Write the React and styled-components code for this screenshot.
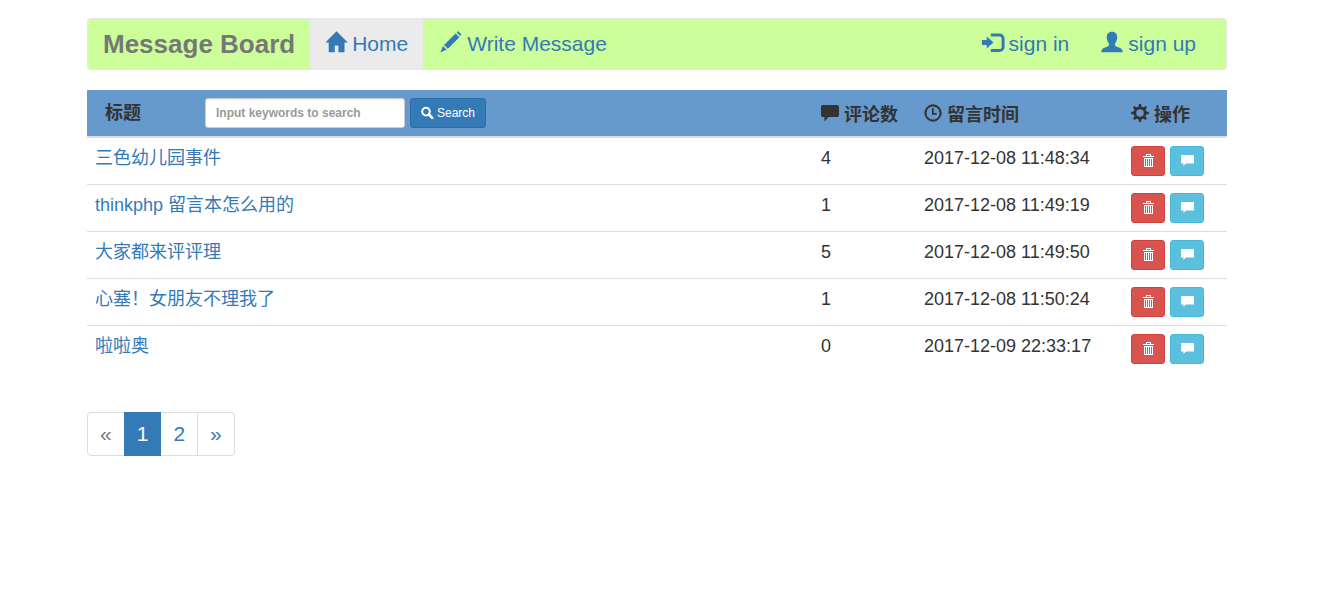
import React from 'react';
import styled, { createGlobalStyle } from 'styled-components';

const GlobalStyle = createGlobalStyle`
  *, *::before, *::after { box-sizing: border-box; }
  body {
    margin: 0;
    background: #fff;
    color: #333;
    font-family: "Liberation Sans", Arial, "Noto Sans CJK SC", sans-serif;
    font-size: 18px;
    line-height: 26px;
  }
  a { color: #337ab7; text-decoration: none; }
`;

const Page = styled.div`
  padding: 18px 20px 20px 15px;
`;

const Container = styled.div`
  max-width: 1140px;
  margin: 0 auto;
`;

const Navbar = styled.nav`
  display: flex;
  min-height: 52px;
  margin-bottom: 20px;
  padding-right: 15px;
  background: #ccff99;
  border: 1px solid #e7e7e7;
  border-radius: 4px;
`;

const Brand = styled.a`
  padding: 12px 15px;
  color: #777;
  font-size: 26px;
  font-weight: bold;
  white-space: nowrap;
`;

const NavList = styled.ul`
  display: flex;
  gap: 2px;
  flex: ${(p) => (p.$grow ? 1 : 'none')};
  margin: 0;
  padding: 0;
  list-style: none;
`;

const NavLink = styled.a`
  display: flex;
  gap: 5px;
  height: 100%;
  padding: 12px 15px;
  font-size: 21px;
  white-space: nowrap;
  background: ${(p) => (p.$active ? '#ebebeb' : 'transparent')};
`;

const Glyph = styled.svg`
  flex: none;
  width: ${(p) => p.$size}px;
  height: ${(p) => p.$size}px;
  fill: currentColor;
  overflow: visible;
`;

const Table = styled.table`
  width: 100%;
  margin-bottom: 40px;
  table-layout: fixed;
  border-collapse: separate;
  border-spacing: 0;
`;

const Col = styled.col`
  width: ${(p) => p.$width};
`;

const HeadCell = styled.th`
  padding: 8px;
  background: #6699cc;
  border-bottom: 2px solid #ddd;
  text-align: left;
  vertical-align: bottom;
  white-space: nowrap;
`;

const HeadLabel = styled.span`
  display: flex;
  align-items: center;
  gap: 5px;
  ${Glyph} { margin-bottom: 4px; }
`;

const SearchForm = styled.form`
  display: flex;
  align-items: center;
  gap: 5px;
  padding-left: 10px;
`;

const SearchTitle = styled.label`
  width: 95px;
  line-height: 30px;
`;

const SearchInput = styled.input`
  width: 200px;
  height: 30px;
  padding: 5px 10px;
  color: #555;
  background: #fff;
  border: 1px solid #ccc;
  border-radius: 3px;
  font: bold 12px/18px "Liberation Sans", Arial, sans-serif;
  box-shadow: inset 0 1px 1px rgba(0, 0, 0, 0.075);
  &::placeholder { color: #999; opacity: 1; }
`;

const tones = {
  primary: ['#337ab7', '#2e6da4'],
  danger: ['#d9534f', '#d43f3a'],
  info: ['#5bc0de', '#46b8da'],
};

const Button = styled.button`
  display: inline-flex;
  align-items: center;
  gap: 4px;
  height: 30px;
  padding: 0 10px;
  color: #fff;
  background: ${(p) => tones[p.$tone][0]};
  border: 1px solid ${(p) => tones[p.$tone][1]};
  border-radius: 3px;
  font: 12px/18px "Liberation Sans", Arial, sans-serif;
  cursor: pointer;
`;

const Cell = styled.td`
  padding: 8px;
  vertical-align: top;
  line-height: 24px;
  white-space: nowrap;
  tr + tr > & { border-top: 1px solid #ddd; }
`;

const Actions = styled.div`
  display: flex;
  gap: 5px;
`;

const Pagination = styled.ul`
  display: flex;
  margin: 0;
  padding: 0;
  list-style: none;
  li + li { margin-left: -1px; }
  li:first-child > * { border-radius: 4px 0 0 4px; }
  li:last-child > * { border-radius: 0 4px 4px 0; }
`;

const PageLink = styled.a`
  display: block;
  position: relative;
  z-index: ${(p) => (p.$active ? 1 : 0)};
  padding: 6px 12px;
  color: ${(p) => (p.$active ? '#fff' : p.$disabled ? '#777' : '#337ab7')};
  background: ${(p) => (p.$active ? '#337ab7' : '#fff')};
  border: 1px solid ${(p) => (p.$active ? '#337ab7' : '#ddd')};
  font-size: 21px;
  line-height: 30px;
  text-align: center;
`;

const shapes = {
  home: <path d="M11.5.2 22.8 11.6h-3.3v9.6h-6.1v-6.6H9.8v6.6H3.7v-9.6H.4L6.8 5z" />,
  pencil: <path d="M16.7 1.3l.8-.7q.7-.4 1.3.2l2 2q.6.7.1 1.4l-.9.9zM15.6 2.4l3.8 3.9L7.9 17.8 4 13.9zM3 15l3.6 3.7L.1 21.6l.5-.9z" />,
  signin: (
    <>
      <path d="M-.1 9h4.8V5.6l6.8 5.9-6.8 5.9V14H-.1z" />
      <path d="M8.8 4h8.7a3.6 3.6 0 0 1 3.6 3.6v8.3a3.6 3.6 0 0 1-3.6 3.6H8.8" fill="none" stroke="currentColor" strokeWidth="3" />
    </>
  ),
  user: <path d="M11 .8c3.7 0 5.4 2.5 5.2 5.8-.1 2.5-1 4.3-2.1 5.9v2.1c.2 1 5.3 2.2 6.5 3.4.8.8 1.1 1.9 1.1 3.2H.3c0-1.3.3-2.4 1.1-3.2 1.2-1.2 6.3-2.4 6.5-3.4v-2.1c-1.1-1.6-2-3.4-2.1-5.9C5.6 3.3 7.3.8 11 .8z" />,
  comment: <path d="M2 1h14a2 2 0 0 1 2 2v8a2 2 0 0 1-2 2H7.5L3.5 17.4V13H2a2 2 0 0 1-2-2V3a2 2 0 0 1 2-2z" />,
  time: (
    <>
      <circle cx="9" cy="9" r="7.6" fill="none" stroke="currentColor" strokeWidth="2.1" />
      <path d="M8 4h1.7v5h3v1.7H8z" />
    </>
  ),
  cog: (
    <>
      <circle cx="9" cy="9" r="5.1" fill="none" stroke="currentColor" strokeWidth="2.7" />
      {[0, 45, 90, 135, 180, 225, 270, 315].map((a) => (
        <path key={a} d="M7.2 3.7 8 .1h2l.8 3.6z" transform={`rotate(${a} 9 9)`} />
      ))}
    </>
  ),
  search: (
    <>
      <circle cx="5" cy="4.6" r="3.8" fill="none" stroke="currentColor" strokeWidth="2" />
      <path d="m7.9 7.5 3.3 3.3" stroke="currentColor" strokeWidth="2.5" strokeLinecap="round" />
    </>
  ),
  trash: (
    <>
      <path d="M4 1V-1h5v2h3v1H1V1zM5 0v1h3V0z" fillRule="evenodd" />
      <path d="M2 3h9v8.5q0 .5-.5.5h-8q-.5 0-.5-.5zM3 4v7h1V4zm2 0v7h1V4zm2 0v7h1V4zm2 0v7h1V4z" fillRule="evenodd" />
    </>
  ),
  bubble: <path d="M.5 0h12q.5 0 .5.5V8q0 .5-.5.5H5L2.5 11V8.5h-2Q0 8.500 0 8V.5Q0 0 .5 0z" />,
};

function Icon({ name, size }) {
  return (
    <Glyph $size={size} viewBox={`0 0 ${size} ${size}`} aria-hidden="true">
      {shapes[name]}
    </Glyph>
  );
}

function NavItem({ icon, active, children }) {
  return (
    <li>
      <NavLink href="#" $active={active}>
        <Icon name={icon} size={22} />
        {children}
      </NavLink>
    </li>
  );
}

function HeadItem({ icon, children }) {
  return (
    <HeadCell>
      <HeadLabel>
        <Icon name={icon} size={18} />
        {children}
      </HeadLabel>
    </HeadCell>
  );
}

const messages = [
  ['三色幼儿园事件', 4, '2017-12-08 11:48:34'],
  ['thinkphp 留言本怎么用的', 1, '2017-12-08 11:49:19'],
  ['大家都来评评理', 5, '2017-12-08 11:49:50'],
  ['心塞！女朋友不理我了', 1, '2017-12-08 11:50:24'],
  ['啦啦奥', 0, '2017-12-09 22:33:17'],
];

export default function App() {
  return (
    <Page lang="zh-CN">
      <GlobalStyle />
      <Container>
        <Navbar>
          <Brand href="#">Message Board</Brand>
          <NavList $grow>
            <NavItem icon="home" active>Home</NavItem>
            <NavItem icon="pencil">Write Message</NavItem>
          </NavList>
          <NavList>
            <NavItem icon="signin">sign in</NavItem>
            <NavItem icon="user">sign up</NavItem>
          </NavList>
        </Navbar>
        <Table>
          <colgroup>
            <Col $width="auto" />
            <Col $width="103px" />
            <Col $width="207px" />
            <Col $width="104px" />
          </colgroup>
          <thead>
            <tr>
              <HeadCell>
                <SearchForm onSubmit={(e) => e.preventDefault()}>
                  <SearchTitle htmlFor="keywords">标题</SearchTitle>
                  <SearchInput id="keywords" type="text" placeholder="Input keywords to search" />
                  <Button type="submit" $tone="primary">
                    <Icon name="search" size={12} />
                    Search
                  </Button>
                </SearchForm>
              </HeadCell>
              <HeadItem icon="comment">评论数</HeadItem>
              <HeadItem icon="time">留言时间</HeadItem>
              <HeadItem icon="cog">操作</HeadItem>
            </tr>
          </thead>
          <tbody>
            {messages.map(([title, count, time]) => (
              <tr key={title}>
                <Cell><a href="#">{title}</a></Cell>
                <Cell>{count}</Cell>
                <Cell>{time}</Cell>
                <Cell>
                  <Actions>
                    <Button type="button" $tone="danger" aria-label="Delete">
                      <Icon name="trash" size={12} />
                    </Button>
                    <Button type="button" $tone="info" aria-label="Comment">
                      <Icon name="bubble" size={12} />
                    </Button>
                  </Actions>
                </Cell>
              </tr>
            ))}
          </tbody>
        </Table>
        <Pagination>
          <li><PageLink as="span" $disabled>«</PageLink></li>
          <li><PageLink href="#" $active aria-current="page">1</PageLink></li>
          <li><PageLink href="#">2</PageLink></li>
          <li><PageLink href="#">»</PageLink></li>
        </Pagination>
      </Container>
    </Page>
  );
}
